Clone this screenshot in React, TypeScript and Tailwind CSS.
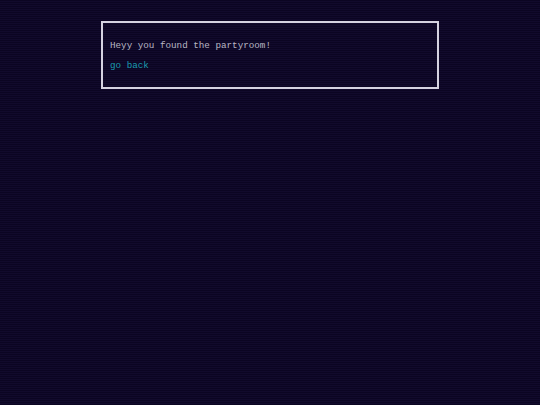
export default function App() {
  return (
    <main className="min-h-[405px] w-full bg-[#0d0626] bg-[repeating-linear-gradient(0deg,#0b0522_0px,#0b0522_1px,#110a2c_1px,#110a2c_2px)] pt-[21px] font-['Liberation_Mono',monospace]">
      <div className="mx-auto w-[338px] h-[68px] border-2 border-[#d4d2e0] px-[7px] pt-[17px]">
        <p className="text-[9.25px] leading-[12px] text-[#b9b7c4]">
          Heyy you found the partyroom!
        </p>
        <a href="#" className="mt-[8px] block text-[9.25px] leading-[12px] text-[#1a9cb0]">
          go back
        </a>
      </div>
    </main>
  );
}
